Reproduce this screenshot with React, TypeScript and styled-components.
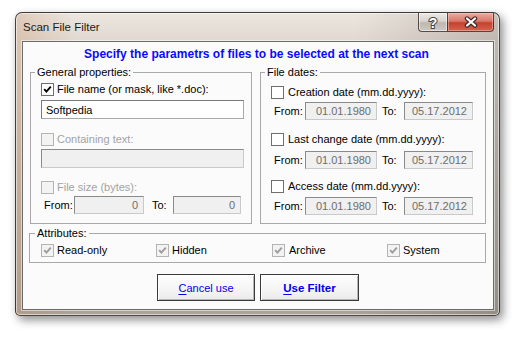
import styled, { createGlobalStyle } from "styled-components";

const GlobalStyle = createGlobalStyle`
  html, body {
    margin: 0;
    padding: 0;
    background: #fff;
  }
  body {
    font-family: "Liberation Sans", Arial, sans-serif;
    font-size: 11px;
    color: #000;
  }
`;

const Page = styled.div`
  width: 521px;
  height: 337px;
  box-sizing: border-box;
  padding: 12px 0 0 15px;
  overflow: hidden;
`;

const Window = styled.div`
  width: 485px;
  height: 304px;
  box-sizing: border-box;
  display: flex;
  flex-direction: column;
  padding: 0 5px 5px 6px;
  border: 1px solid rgba(38, 34, 30, 0.8);
  border-radius: 7px 7px 5px 5px;
  background: linear-gradient(
      90deg,
      rgba(196, 140, 100, 0.3) 0,
      rgba(196, 140, 100, 0) 60px,
      rgba(0, 0, 0, 0) 340px,
      rgba(70, 66, 60, 0.22) 100%
    ),
    linear-gradient(180deg, #ece6df 0, #e1d9d0 28px, #c7beb4 50%, #a9a299 100%);
  box-shadow: 3px 4px 10px rgba(0, 0, 0, 0.45),
    inset 0 0 0 1px rgba(255, 255, 255, 0.55);
`;

const TitleBar = styled.div`
  display: flex;
  align-items: flex-start;
  height: 28px;
  flex: none;
`;

const Title = styled.div`
  margin-left: 1px;
  line-height: 28px;
  font-size: 11.5px;
  color: #1a1a1a;
`;

const CaptionButtons = styled.div`
  display: flex;
  margin-left: auto;
  height: 19px;
`;

const CaptionButton = styled.div<{ $kind: "help" | "close" }>`
  box-sizing: border-box;
  height: 19px;
  width: ${(p) => (p.$kind === "close" ? 47 : 29)}px;
  display: flex;
  align-items: center;
  justify-content: center;
  border: 1px solid rgba(62, 50, 44, 0.85);
  border-top: none;
  ${(p) =>
    p.$kind === "close"
      ? `
    border-radius: 0 0 4px 0;
    background: linear-gradient(180deg, #e9ada2 0, #d9786a 45%, #c6402f 55%, #d2654f 100%);
    box-shadow: inset 0 0 0 1px rgba(255, 210, 200, 0.45);
  `
      : `
    border-right: none;
    border-radius: 0 0 0 4px;
    background: linear-gradient(180deg, #ece9e6 0, #d8d4d0 45%, #bdb8b2 55%, #cdc8c2 100%);
    box-shadow: inset 0 0 0 1px rgba(255, 255, 255, 0.5);
  `}
`;

const Client = styled.div`
  flex: 1;
  display: flex;
  flex-direction: column;
  border: 1px solid #6b6b6b;
  background: #fbfbfb;
  box-shadow: 0 0 0 1px rgba(255, 255, 255, 0.5);
`;

const Heading = styled.div`
  padding-top: 5px;
  line-height: 14px;
  text-align: center;
  font-size: 12px;
  font-weight: bold;
  color: #0a0aff;
  padding-right: 3px;
`;

const GroupsRow = styled.div`
  display: flex;
  gap: 8px;
  margin-top: 5px;
  padding-left: 7px;
`;

const Group = styled.fieldset<{ $width?: number }>`
  margin: 0;
  min-width: 0;
  ${(p) => (p.$width ? `width: ${p.$width}px;` : "")}
  box-sizing: border-box;
  border: 1px solid #a9a9a9;
  padding: 2px 7px 8px 10px;
  display: flex;
  flex-direction: column;
`;

const AttrGroup = styled(Group)`
  margin: 3px 7px 0 6px;
  padding: 2px 7px 4px 11px;
`;

const Legend = styled.legend`
  padding: 0 2px;
  margin-left: -6px;
  line-height: 13px;
  font-size: 11px;
`;

const CheckRow = styled.div<{ $mt?: number; $gap?: number }>`
  display: flex;
  align-items: center;
  gap: ${(p) => p.$gap ?? 3}px;
  height: 16px;
  margin-top: ${(p) => p.$mt ?? 0}px;
`;

const Box = styled.span<{ $disabled?: boolean }>`
  flex: none;
  width: 13px;
  height: 13px;
  box-sizing: border-box;
  display: flex;
  align-items: center;
  justify-content: center;
  border: 1px solid ${(p) => (p.$disabled ? "#b4b4b4" : "#6f6f6f")};
  background: ${(p) => (p.$disabled ? "#f3f3f3" : "#fff")};
`;

const Label = styled.span<{ $disabled?: boolean }>`
  line-height: 13px;
  white-space: nowrap;
  color: ${(p) => (p.$disabled ? "#a3a3a3" : "#000")};
`;

const Edit = styled.div<{ $mt?: number; $disabled?: boolean; $align?: string; $width?: number }>`
  box-sizing: border-box;
  height: 19px;
  ${(p) => (p.$width ? `width: ${p.$width}px; flex: none;` : "")}
  margin-top: ${(p) => p.$mt ?? 0}px;
  padding: 0 5px 0 4px;
  display: flex;
  align-items: center;
  justify-content: ${(p) => (p.$align === "right" ? "flex-end" : "flex-start")};
  background: ${(p) => (p.$disabled ? "#f0f0f0" : "#fff")};
  border: 1px solid ${(p) => (p.$disabled ? "#c9c9c9" : "#a8a8a8")};
  border-top-color: ${(p) => (p.$disabled ? "#8a8a8a" : "#7a7a7a")};
  border-left-color: ${(p) => (p.$disabled ? "#8a8a8a" : "#7a7a7a")};
  color: ${(p) => (p.$disabled ? "#6d6d6d" : "#000")};
  white-space: nowrap;
`;

const RangeRow = styled.div<{ $mt?: number }>`
  display: flex;
  align-items: center;
  height: 18px;
  margin-top: ${(p) => p.$mt ?? 0}px;
  & > ${Edit} {
    height: 18px;
  }
`;

const RangeLabel = styled.span<{ $width: number; $pad?: number }>`
  flex: none;
  box-sizing: border-box;
  width: ${(p) => p.$width}px;
  padding-left: ${(p) => p.$pad ?? 0}px;
  line-height: 13px;
`;

const AttrRow = styled.div`
  display: grid;
  grid-template-columns: 115px 116px 115px auto;
  height: 16px;
  align-items: center;
`;

const ButtonRow = styled.div`
  display: flex;
  justify-content: center;
  gap: 5px;
  margin-top: 11px;
`;

const Button = styled.div<{ $width: number; $bold?: boolean }>`
  box-sizing: border-box;
  width: ${(p) => p.$width}px;
  height: 27px;
  display: flex;
  align-items: center;
  justify-content: center;
  border: 1px solid #3a3a3a;
  background: linear-gradient(180deg, #fdfdfd 0, #f6f6f6 50%, #ebebeb 100%);
  box-shadow: inset 1px 1px 0 #fff, inset -1px -1px 0 #b5b5b5;
  color: #0000ee;
  font-size: ${(p) => (p.$bold ? 11.5 : 11)}px;
  font-weight: ${(p) => (p.$bold ? "bold" : "normal")};
  & u {
    text-decoration-thickness: 1px;
    text-underline-offset: 2px;
  }
`;

function CheckMark({ disabled }: { disabled?: boolean }) {
  return (
    <svg width="9" height="9" viewBox="0 0 9 9">
      <path
        d="M1.2 4.2 L3.4 6.6 L7.8 1.6"
        fill="none"
        stroke={disabled ? "#9c9c9c" : "#000"}
        strokeWidth="1.9"
      />
    </svg>
  );
}

function Check({
  checked,
  disabled,
  label,
  labelDisabled,
  mt,
  gap,
}: {
  checked?: boolean;
  disabled?: boolean;
  label: string;
  labelDisabled?: boolean;
  mt?: number;
  gap?: number;
}) {
  return (
    <CheckRow $mt={mt} $gap={gap}>
      <Box $disabled={disabled}>{checked && <CheckMark disabled={disabled} />}</Box>
      <Label $disabled={labelDisabled}>{label}</Label>
    </CheckRow>
  );
}

function DateRange({ mt }: { mt: number }) {
  return (
    <RangeRow $mt={mt}>
      <RangeLabel $width={34} $pad={3}>
        From:
      </RangeLabel>
      <Edit $disabled $align="right" $width={72}>
        01.01.1980
      </Edit>
      <RangeLabel $width={27} $pad={5}>
        To:
      </RangeLabel>
      <Edit $disabled $align="right" $width={69}>
        05.17.2012
      </Edit>
    </RangeRow>
  );
}

function HelpGlyph() {
  return (
    <svg width="14" height="15" viewBox="0 0 14 15">
      <text
        x="7"
        y="12.5"
        textAnchor="middle"
        fontFamily="Liberation Sans, Arial, sans-serif"
        fontWeight="bold"
        fontSize="14"
        fill="#fff"
        stroke="#4a4540"
        strokeWidth="2"
        paintOrder="stroke"
      >
        ?
      </text>
    </svg>
  );
}

function CloseGlyph() {
  return (
    <svg width="14" height="12" viewBox="0 0 14 12">
      <path d="M3 2.5 L11 9.5 M11 2.5 L3 9.5" stroke="#3f2a26" strokeWidth="4.4" strokeLinecap="round" />
      <path d="M3 2.5 L11 9.5 M11 2.5 L3 9.5" stroke="#fff" strokeWidth="2.2" strokeLinecap="round" />
    </svg>
  );
}

export default function App() {
  return (
    <Page>
      <GlobalStyle />
      <Window>
        <TitleBar>
          <Title>Scan File Filter</Title>
          <CaptionButtons>
            <CaptionButton $kind="help">
              <HelpGlyph />
            </CaptionButton>
            <CaptionButton $kind="close">
              <CloseGlyph />
            </CaptionButton>
          </CaptionButtons>
        </TitleBar>
        <Client>
          <Heading>Specify the parametrs of files to be selected at the next scan</Heading>
          <GroupsRow>
            <Group $width={222}>
              <Legend>General properties:</Legend>
              <Check checked label="File name (or mask, like *.doc):" />
              <Edit $mt={3}>Softpedia</Edit>
              <Check disabled labelDisabled label="Containing text:" mt={12} />
              <Edit $mt={2} $disabled />
              <Check disabled labelDisabled label="File size (bytes):" mt={11} />
              <RangeRow $mt={1}>
                <RangeLabel $width={33} $pad={3}>
                  From:
                </RangeLabel>
                <Edit $disabled $align="right" $width={70}>
                  0
                </Edit>
                <RangeLabel $width={29} $pad={8}>
                  To:
                </RangeLabel>
                <Edit $disabled $align="right" $width={68}>
                  0
                </Edit>
              </RangeRow>
            </Group>
            <Group $width={226}>
              <Legend>File dates:</Legend>
              <Check label="Creation date (mm.dd.yyyy):" mt={3} gap={4} />
              <DateRange mt={2} />
              <Check label="Last change date (mm.dd.yyyy):" mt={11} gap={4} />
              <DateRange mt={4} />
              <Check label="Access date (mm.dd.yyyy):" mt={9} gap={4} />
              <DateRange mt={3} />
            </Group>
          </GroupsRow>
          <AttrGroup>
            <Legend>Attributes:</Legend>
            <AttrRow>
              <Check checked disabled label="Read-only" />
              <Check checked disabled label="Hidden" />
              <Check checked disabled label="Archive" gap={4} />
              <Check checked disabled label="System" />
            </AttrRow>
          </AttrGroup>
          <ButtonRow>
            <Button $width={98}>
              <span>
                <u>C</u>ancel use
              </span>
            </Button>
            <Button $width={99} $bold>
              <span>
                <u>U</u>se Filter
              </span>
            </Button>
          </ButtonRow>
        </Client>
      </Window>
    </Page>
  );
}
